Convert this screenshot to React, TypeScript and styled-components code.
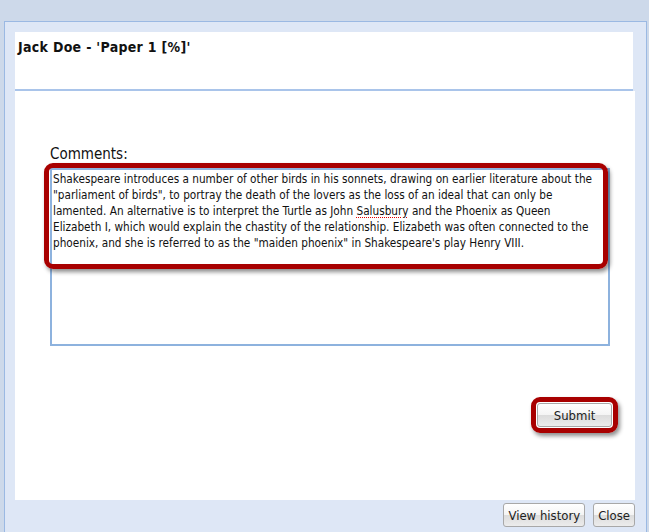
import React from "react";
import styled, { createGlobalStyle } from "styled-components";

const GlobalStyle = createGlobalStyle`
  html, body {
    margin: 0;
    padding: 0;
    background: #cdd9ea;
    height: 532px;
    overflow: hidden;
  }
  body {
    font-family: "DejaVu Sans", Verdana, sans-serif;
    font-stretch: condensed;
  }
`;

const Page = styled.div`
  padding: 21px 2px 0 4px;
`;

const Frame = styled.div`
  height: 520px;
  background: #dee7f6;
  border: 1px solid #9bb9e3;
  border-bottom: none;
  padding: 10px 11px 0 10px;
  display: flex;
  flex-direction: column;
`;

const Header = styled.div`
  height: 59px;
  background: #fff;
  border-bottom: 2px solid #a9c4ea;
  margin-right: 2px;
  padding: 7px 3px 0;
  box-sizing: border-box;
`;

const Title = styled.div`
  font-size: 14px;
  font-weight: bold;
  letter-spacing: 0.3px;
  color: #111;
`;

const Body = styled.div`
  height: 409px;
  background: #fff;
  padding: 54px 26px 0 35px;
  box-sizing: border-box;
  display: flex;
  flex-direction: column;
`;

const Label = styled.div`
  font-size: 15px;
  color: #111;
  height: 23px;
`;

const Field = styled.div`
  position: relative;
  width: 560px;
  height: 178px;
  box-sizing: border-box;
  border: 2px solid #8db2de;
  padding: 1px 1px;
  font-size: 11.7px;
  line-height: 16px;
  color: #111;
`;

const Highlight = styled.div<{ $pad: number }>`
  position: absolute;
  inset: -${(p) => p.$pad}px;
  border: 5px solid #a80000;
  border-radius: 9px;
  box-shadow: 2px 3px 4px rgba(0, 0, 0, 0.45);
  pointer-events: none;
`;

const FieldMark = styled(Highlight)`
  inset: auto;
  left: -8px;
  top: -7px;
  width: 564px;
  height: 106px;
  box-sizing: border-box;
`;

const Typo = styled.span`
  text-decoration: underline dotted #e00000;
  text-decoration-thickness: 1px;
  text-underline-offset: 2px;
`;

const SubmitRow = styled.div`
  display: flex;
  justify-content: flex-end;
  margin-top: 57px;
  margin-right: -3px;
`;

const Marked = styled.div`
  position: relative;
`;

const Button = styled.button<{ $size?: number }>`
  font-family: inherit;
  font-stretch: condensed;
  font-size: ${(p) => p.$size ?? 13}px;
  color: #222;
  height: 24px;
  padding: 0 4px;
  border: 1px solid #a8a8a8;
  border-radius: 3px;
  background: linear-gradient(#ffffff 0%, #f4f4f4 50%, #dcdcdc 51%, #ececec 100%);
  cursor: pointer;
`;

const SubmitButton = styled(Button)`
  width: 75px;
`;

const Footer = styled.div`
  display: flex;
  justify-content: flex-end;
  gap: 8px;
  padding-top: 3px;
  margin-right: 0;
`;

const lines = [
  "Shakespeare introduces a number of other birds in his sonnets, drawing on earlier literature about the",
  "\"parliament of birds\", to portray the death of the lovers as the loss of an ideal that can only be",
  null,
  "Elizabeth I, which would explain the chastity of the relationship. Elizabeth was often connected to the",
  "phoenix, and she is referred to as the \"maiden phoenix\" in Shakespeare's play Henry VIII.",
];

export default function App() {
  return (
    <>
      <GlobalStyle />
      <Page>
        <Frame>
          <Header>
            <Title>Jack Doe - 'Paper 1 [%]'</Title>
          </Header>
          <Body>
            <Label>Comments:</Label>
            <Field>
              {lines.map((line, i) =>
                line === null ? (
                  <div key={i}>
                    lamented. An alternative is to interpret the Turtle as John <Typo>Salusbury</Typo> and the Phoenix as Queen
                  </div>
                ) : (
                  <div key={i}>{line}</div>
                )
              )}
              <FieldMark $pad={0} />
            </Field>
            <SubmitRow>
              <Marked>
                <SubmitButton>Submit</SubmitButton>
                <Highlight $pad={6} />
              </Marked>
            </SubmitRow>
          </Body>
          <Footer>
            <Button>View history</Button>
            <Button>Close</Button>
          </Footer>
        </Frame>
      </Page>
    </>
  );
}
